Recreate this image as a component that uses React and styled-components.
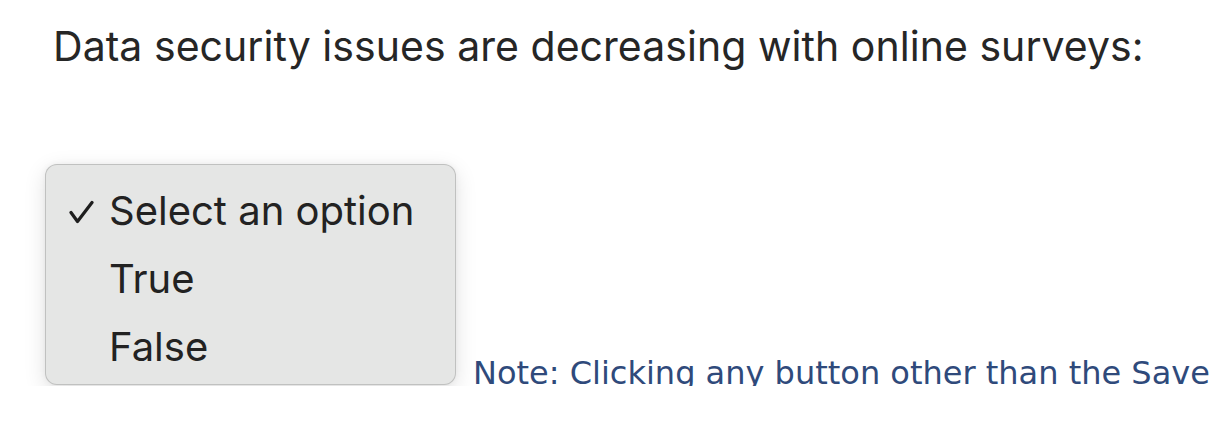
import React from "react";
import styled, { createGlobalStyle } from "styled-components";

const Global = createGlobalStyle`
  html, body { margin: 0; padding: 0; background: #ffffff; }
  * { box-sizing: border-box; }
`;

const Page = styled.div`
  width: 1216px;
  height: 430px;
  background: #ffffff;
`;

const Clip = styled.div`
  height: 386px;
  overflow: hidden;
  display: flex;
  flex-direction: column;
`;

const Question = styled.h1`
  margin: 0;
  padding: 19px 0 0 53px;
  font-family: Inter, "Liberation Sans", sans-serif;
  font-weight: 400;
  font-size: 41px;
  line-height: 54px;
  color: #262626;
  letter-spacing: 0.04px;
  white-space: nowrap;
`;

const Row = styled.div`
  display: flex;
  align-items: flex-end;
  margin-top: 91px;
  padding-left: 45px;
  gap: 17px;
`;

const Menu = styled.div`
  width: 411px;
  height: 221px;
  flex: none;
  background: #e5e6e5;
  border: 1px solid rgba(0, 0, 0, 0.16);
  border-radius: 12px;
  box-shadow: 0 6px 22px rgba(0, 0, 0, 0.12), 0 0 6px rgba(0, 0, 0, 0.05);
  padding-top: 11px;
  display: flex;
  flex-direction: column;
`;

const Option = styled.div`
  height: 68px;
  display: flex;
  align-items: center;
  font-family: Inter, "Liberation Sans", sans-serif;
  font-size: 40px;
  color: #222222;
  white-space: nowrap;
`;

const Check = styled.span`
  width: 63px;
  height: 24px;
  padding-left: 22px;
  display: inline-flex;
  align-items: center;
  margin-top: 4px;
`;

const Note = styled.div`
  font-family: "Century Gothic", "DejaVu Sans", sans-serif;
  font-size: 32px;
  color: #2f4a7b;
  white-space: nowrap;
  line-height: 34px;
  margin-bottom: -5px;
`;

const CheckIcon = () => (
  <svg width="26" height="24" viewBox="0 0 26 24" fill="none">
    <path d="M3 12.5 L9.5 21.5 L24 2.5" stroke="#1e1e1e" strokeWidth="3.2" strokeLinecap="round" strokeLinejoin="round" />
  </svg>
);

const options = [
  { label: "Select an option", checked: true },
  { label: "True" },
  { label: "False" },
];

export default function App() {
  return (
    <Page>
      <Global />
      <Clip>
        <Question>Data security issues are decreasing with online surveys:</Question>
        <Row>
          <Menu>
            {options.map((o) => (
              <Option key={o.label}>
                <Check>{o.checked && <CheckIcon />}</Check>
                {o.label}
              </Option>
            ))}
          </Menu>
          <Note>Note: Clicking any button other than the Save</Note>
        </Row>
      </Clip>
    </Page>
  );
}
